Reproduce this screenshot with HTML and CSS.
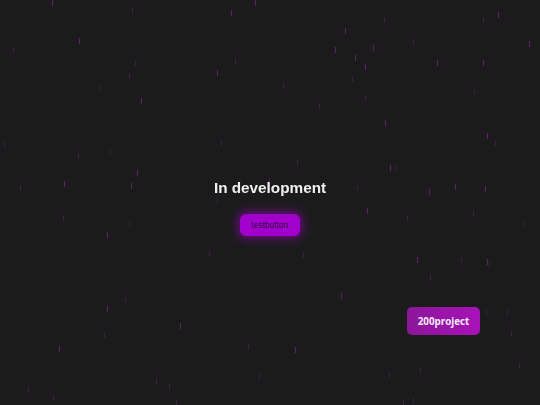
FILE: index.html
```html
<!DOCTYPE html>
<html lang="en">
<head>
<meta charset="utf-8">
<title>In development</title>
<link rel="stylesheet" href="styles.css">
</head>
<body>
<div class="rain">
<i class="drop" style="left:52px;top:0px"></i>
<i class="drop faint" style="left:132px;top:8px"></i>
<i class="drop" style="left:79px;top:38px"></i>
<i class="drop faint" style="left:13px;top:47px"></i>
<i class="drop faint" style="left:135px;top:60px"></i>
<i class="drop faint" style="left:129px;top:73px"></i>
<i class="drop faint" style="left:99px;top:85px"></i>
<i class="drop" style="left:141px;top:98px"></i>
<i class="drop" style="left:255px;top:0px"></i>
<i class="drop" style="left:231px;top:10px"></i>
<i class="drop" style="left:345px;top:28px"></i>
<i class="drop" style="left:335px;top:47px"></i>
<i class="drop" style="left:355px;top:55px"></i>
<i class="drop faint" style="left:235px;top:58px"></i>
<i class="drop" style="left:217px;top:70px"></i>
<i class="drop faint" style="left:352px;top:76px"></i>
<i class="drop faint" style="left:283px;top:83px"></i>
<i class="drop faint" style="left:319px;top:103px"></i>
<i class="drop faint" style="left:384px;top:17px"></i>
<i class="drop" style="left:498px;top:12px"></i>
<i class="drop faint" style="left:483px;top:17px"></i>
<i class="drop" style="left:373px;top:45px"></i>
<i class="drop" style="left:529px;top:41px"></i>
<i class="drop faint" style="left:413px;top:40px"></i>
<i class="drop" style="left:365px;top:64px"></i>
<i class="drop" style="left:437px;top:60px"></i>
<i class="drop" style="left:483px;top:60px"></i>
<i class="drop faint" style="left:474px;top:89px"></i>
<i class="drop faint" style="left:365px;top:95px"></i>
<i class="drop" style="left:385px;top:120px"></i>
<i class="drop" style="left:487px;top:133px"></i>
<i class="drop faint" style="left:495px;top:140px"></i>
<i class="drop faint" style="left:4px;top:142px"></i>
<i class="drop faint" style="left:78px;top:153px"></i>
<i class="drop faint" style="left:110px;top:149px"></i>
<i class="drop" style="left:137px;top:170px"></i>
<i class="drop" style="left:64px;top:181px"></i>
<i class="drop" style="left:131px;top:183px"></i>
<i class="drop faint" style="left:20px;top:185px"></i>
<i class="drop faint" style="left:63px;top:215px"></i>
<i class="drop faint" style="left:129px;top:221px"></i>
<i class="drop" style="left:107px;top:232px"></i>
<i class="drop faint" style="left:221px;top:140px"></i>
<i class="drop faint" style="left:297px;top:160px"></i>
<i class="drop faint" style="left:269px;top:177px"></i>
<i class="drop faint" style="left:357px;top:185px"></i>
<i class="drop faint" style="left:217px;top:198px"></i>
<i class="drop faint" style="left:209px;top:251px"></i>
<i class="drop faint" style="left:303px;top:252px"></i>
<i class="drop" style="left:390px;top:165px"></i>
<i class="drop faint" style="left:395px;top:165px"></i>
<i class="drop" style="left:429px;top:189px"></i>
<i class="drop" style="left:455px;top:184px"></i>
<i class="drop" style="left:485px;top:186px"></i>
<i class="drop" style="left:367px;top:208px"></i>
<i class="drop faint" style="left:407px;top:215px"></i>
<i class="drop faint" style="left:473px;top:210px"></i>
<i class="drop faint" style="left:523px;top:221px"></i>
<i class="drop" style="left:417px;top:257px"></i>
<i class="drop faint" style="left:461px;top:257px"></i>
<i class="drop" style="left:487px;top:259px"></i>
<i class="drop faint" style="left:489px;top:262px"></i>
<i class="drop faint" style="left:125px;top:297px"></i>
<i class="drop" style="left:107px;top:306px"></i>
<i class="drop faint" style="left:104px;top:332px"></i>
<i class="drop" style="left:59px;top:346px"></i>
<i class="drop faint" style="left:156px;top:378px"></i>
<i class="drop faint" style="left:169px;top:384px"></i>
<i class="drop faint" style="left:28px;top:387px"></i>
<i class="drop faint" style="left:53px;top:395px"></i>
<i class="drop faint" style="left:176px;top:400px"></i>
<i class="drop" style="left:341px;top:293px"></i>
<i class="drop" style="left:180px;top:323px"></i>
<i class="drop faint" style="left:248px;top:344px"></i>
<i class="drop" style="left:295px;top:347px"></i>
<i class="drop faint" style="left:259px;top:374px"></i>
<i class="drop faint" style="left:430px;top:274px"></i>
<i class="drop faint" style="left:486px;top:310px"></i>
<i class="drop faint" style="left:507px;top:310px"></i>
<i class="drop faint" style="left:511px;top:331px"></i>
<i class="drop faint" style="left:519px;top:363px"></i>
<i class="drop faint" style="left:420px;top:367px"></i>
<i class="drop faint" style="left:389px;top:372px"></i>
<i class="drop faint" style="left:413px;top:398px"></i>
<i class="drop faint" style="left:403px;top:400px"></i>
</div>
<main class="content">
<h1 class="title">In development</h1>
<button class="test-btn" type="button">testbutton</button>
</main>
<a class="project-btn" href="#">200project</a>
</body>
</html>
```
FILE: styles.css
```css
html, body {
  margin: 0;
  padding: 0;
}
body {
  background: #1c1b1c;
  height: 405px;
  overflow: hidden;
  font-family: "Liberation Sans", Arial, sans-serif;
}
.rain {
  position: fixed;
  inset: 0;
  pointer-events: none;
}
.drop {
  position: absolute;
  width: 1px;
  height: 6px;
  background: rgba(130, 40, 150, 0.6);
  box-shadow: 0 0 1px rgba(130, 40, 150, 0.4);
}
.drop.faint {
  background: rgba(120, 40, 140, 0.35);
  box-shadow: none;
}
.content {
  position: relative;
  display: flex;
  flex-direction: column;
  align-items: center;
  padding-top: 179px;
}
.title {
  margin: 0;
  font-size: 15.3px;
  line-height: 18px;
  font-weight: bold;
  color: #f0f0f0;
}
.test-btn {
  margin-top: 17px;
  width: 60px;
  height: 22px;
  border: none;
  border-radius: 6px;
  background: #a200cc;
  color: #2e0c38;
  font-family: "Liberation Sans", Arial, sans-serif;
  font-size: 8.4px;
  padding: 0;
  box-shadow: 0 0 8px 3px rgba(165, 0, 205, 0.5);
}
.project-btn {
  position: fixed;
  right: 60px;
  bottom: 70px;
  width: 73px;
  height: 28px;
  display: flex;
  align-items: center;
  justify-content: center;
  border-radius: 5px;
  background: linear-gradient(90deg, #8b1799 0%, #a812b8 100%);
  color: #f4eaf6;
  font-family: "Open Sans", "Liberation Sans", sans-serif;
  font-weight: bold;
  font-size: 9.8px;
  text-decoration: none;
}
```
